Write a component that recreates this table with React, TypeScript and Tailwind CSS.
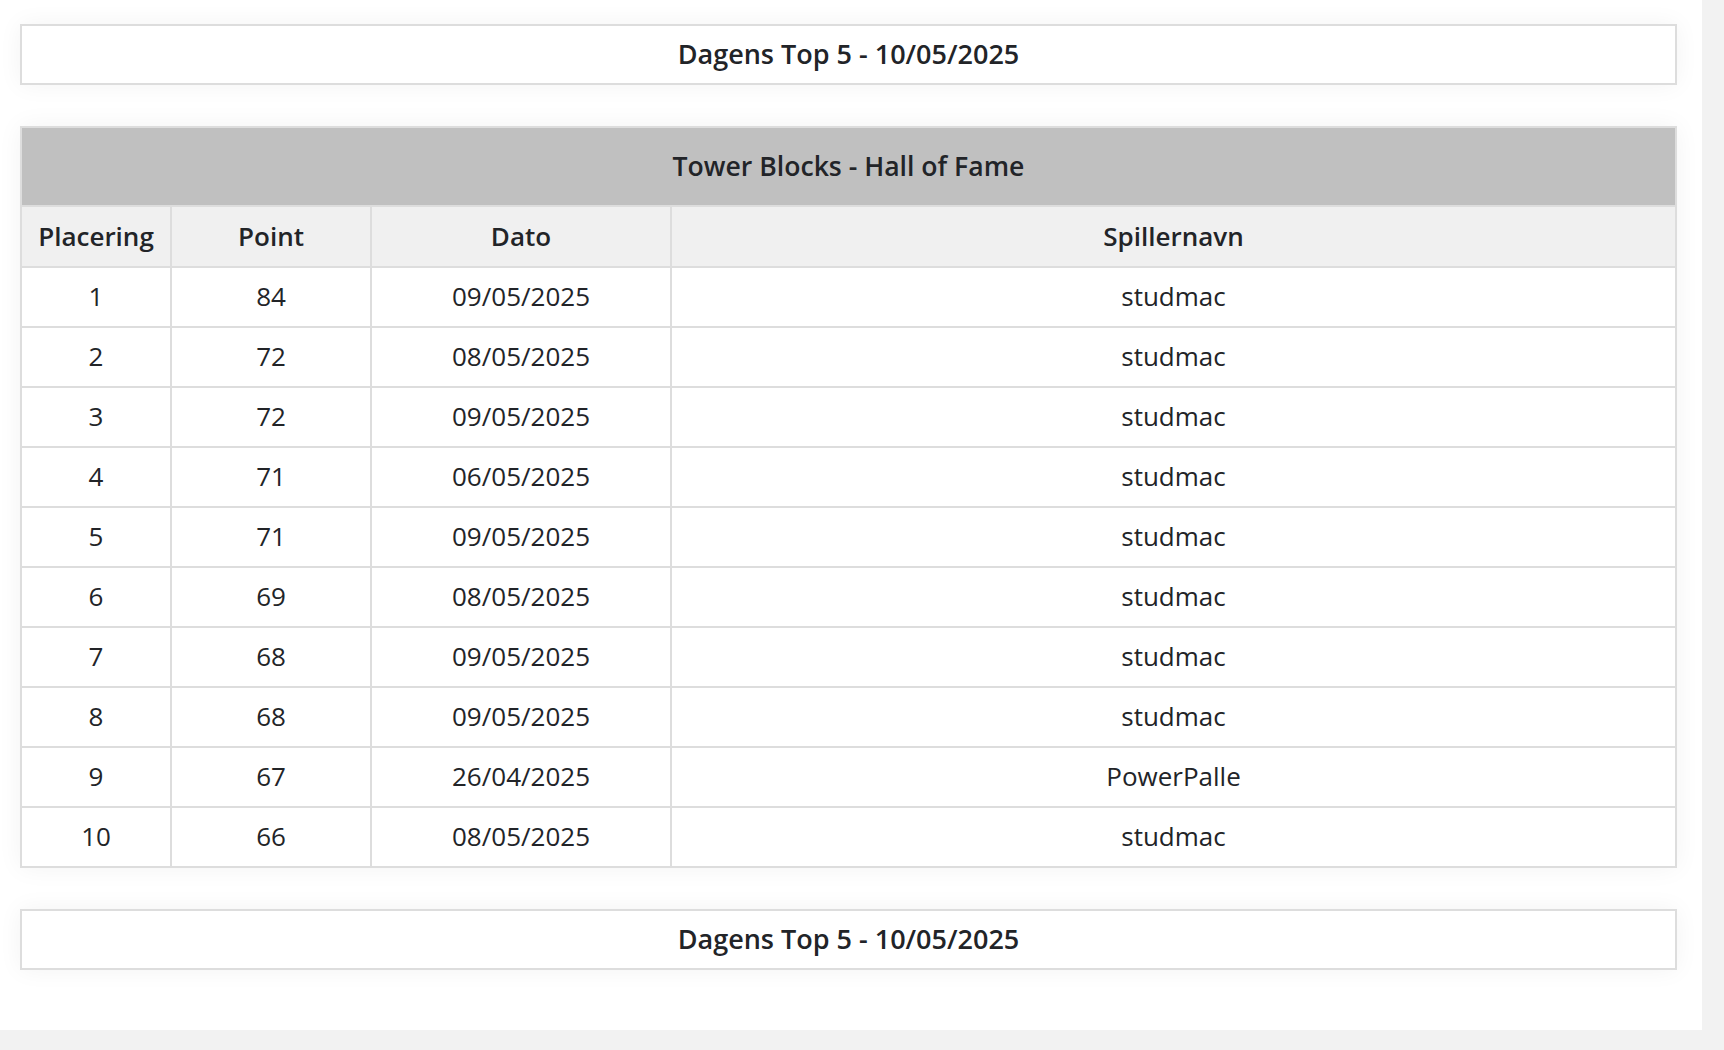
import React from "react";

const rows = [
  { place: 1, points: 84, date: "09/05/2025", name: "studmac" },
  { place: 2, points: 72, date: "08/05/2025", name: "studmac" },
  { place: 3, points: 72, date: "09/05/2025", name: "studmac" },
  { place: 4, points: 71, date: "06/05/2025", name: "studmac" },
  { place: 5, points: 71, date: "09/05/2025", name: "studmac" },
  { place: 6, points: 69, date: "08/05/2025", name: "studmac" },
  { place: 7, points: 68, date: "09/05/2025", name: "studmac" },
  { place: 8, points: 68, date: "09/05/2025", name: "studmac" },
  { place: 9, points: 67, date: "26/04/2025", name: "PowerPalle" },
  { place: 10, points: 66, date: "08/05/2025", name: "studmac" }
];

function DayBox() {
  return (
    <div className="flex h-[61px] items-center justify-center border-2 border-[#dddddd] bg-white text-[27px] font-semibold text-[#222428] shadow-[0_0_24px_rgba(0,0,0,0.05)]">
      Dagens Top 5 - 10/05/2025
    </div>
  );
}

export default function App() {
  return (
    <div
      className="min-h-[1050px] w-[1724px] bg-[#f2f2f2]"
      style={{ fontFamily: '"Open Sans", "Liberation Sans", sans-serif' }}
    >
      <div className="flex h-[1030px] w-[1702px] flex-col gap-[41px] bg-white pl-[20px] pr-[25px] pt-[24px]">
        <DayBox />
        <table className="w-full table-fixed border-collapse border-2 border-[#dddddd] text-center text-[26px] text-[#222428] shadow-[0_0_24px_rgba(0,0,0,0.05)]">
          <colgroup>
            <col className="w-[150px]" />
            <col className="w-[200px]" />
            <col className="w-[300px]" />
            <col />
          </colgroup>
          <thead>
            <tr className="h-[79px] bg-[#c0c0c0]">
              <th colSpan={4} className="border-2 border-[#dddddd] text-[26.6px] font-semibold">
                Tower Blocks - Hall of Fame
              </th>
            </tr>
            <tr className="h-[61px] bg-[#f0f0f0]">
              <th className="border-2 border-[#dddddd] font-semibold">Placering</th>
              <th className="border-2 border-[#dddddd] font-semibold">Point</th>
              <th className="border-2 border-[#dddddd] font-semibold">Dato</th>
              <th className="border-2 border-[#dddddd] font-semibold">Spillernavn</th>
            </tr>
          </thead>
          <tbody>
            {rows.map((r) => (
              <tr key={r.place} className="h-[60px] bg-white">
                <td className="border-2 border-[#dddddd] pb-[2px]">{r.place}</td>
                <td className="border-2 border-[#dddddd] pb-[2px]">{r.points}</td>
                <td className="border-2 border-[#dddddd] pb-[2px]">{r.date}</td>
                <td className="border-2 border-[#dddddd] pb-[2px]">{r.name}</td>
              </tr>
            ))}
          </tbody>
        </table>
        <DayBox />
      </div>
    </div>
  );
}
